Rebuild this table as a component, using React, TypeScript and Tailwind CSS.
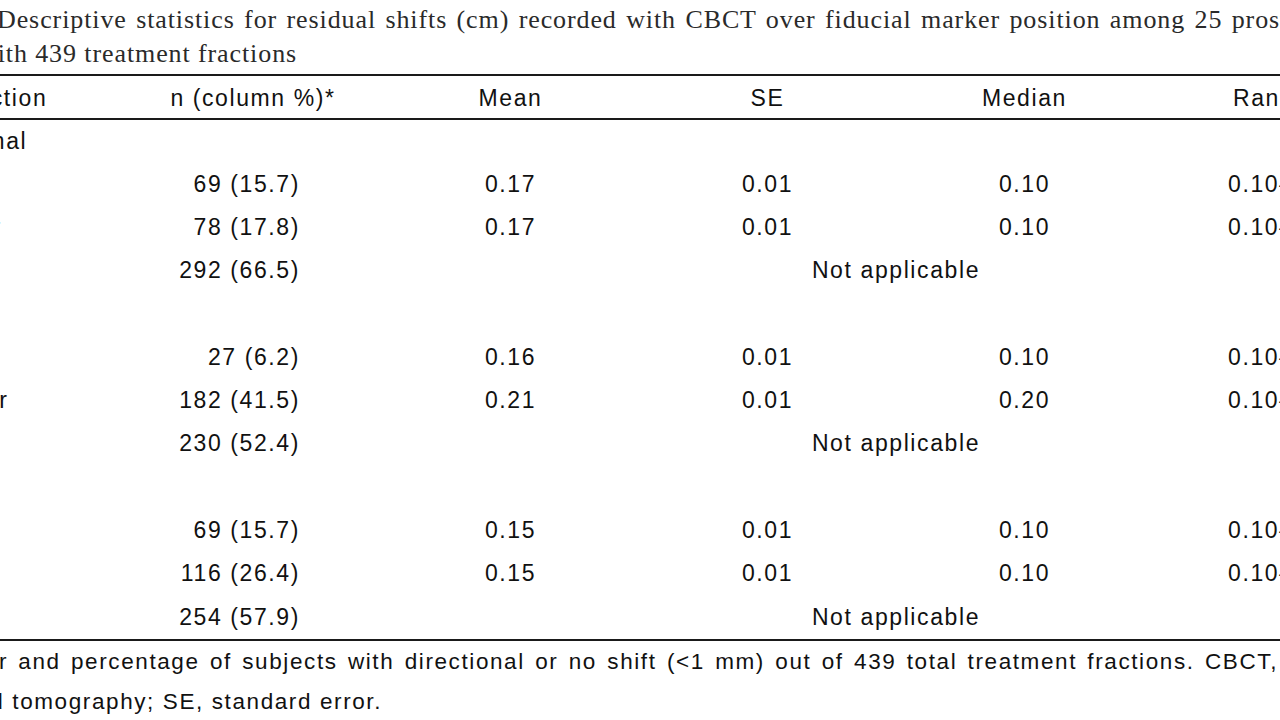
import React from "react";

type Row =
  | { kind: "section"; label: string }
  | { kind: "data"; label: string; n: string; mean: string; se: string; median: string; range: string }
  | { kind: "none"; label: string; n: string };

const rows: Row[] = [
  { kind: "section", label: "Longitudinal" },
  { kind: "data", label: "Inferior", n: "69 (15.7)", mean: "0.17", se: "0.01", median: "0.10", range: "0.10–0.50" },
  { kind: "data", label: "Superior", n: "78 (17.8)", mean: "0.17", se: "0.01", median: "0.10", range: "0.10–0.50" },
  { kind: "none", label: "No shift", n: "292 (66.5)" },
  { kind: "section", label: "Vertical" },
  { kind: "data", label: "Anterior", n: "27 (6.2)", mean: "0.16", se: "0.01", median: "0.10", range: "0.10–0.30" },
  { kind: "data", label: "Posterior", n: "182 (41.5)", mean: "0.21", se: "0.01", median: "0.20", range: "0.10–0.70" },
  { kind: "none", label: "No shift", n: "230 (52.4)" },
  { kind: "section", label: "Lateral" },
  { kind: "data", label: "Left", n: "69 (15.7)", mean: "0.15", se: "0.01", median: "0.10", range: "0.10–0.40" },
  { kind: "data", label: "Right", n: "116 (26.4)", mean: "0.15", se: "0.01", median: "0.10", range: "0.10–0.40" },
  { kind: "none", label: "No shift", n: "254 (57.9)" },
];

const sans = "font-['Liberation_Sans',Arial,sans-serif] text-[23px] tracking-[1.6px]";

export default function App() {
  return (
    <div className="h-[720px] w-[1280px] overflow-hidden bg-white text-[#111]">
      {/* Caption */}
      <div className="pt-[3px] font-['Liberation_Serif','Times_New_Roman',serif] text-[26px] leading-[34px] tracking-[0.9px] text-[#2a2a2a]">
        <p className="ml-[-3px] whitespace-nowrap [word-spacing:2px]">
          Descriptive statistics for residual shifts (cm) recorded with CBCT over fiducial marker position among 25 prostate cancer patients
        </p>
        <p className="ml-[-22px] whitespace-nowrap">with 439 treatment fractions</p>
      </div>

      <div className="mt-[3px] ml-[-116px] w-[1526px] border-b-2 border-[#1a1a1a]">
        <table className={`w-[1526px] table-fixed border-collapse ${sans}`}>
          <colgroup>
            <col className="w-[240px]" />
            <col className="w-[258px]" />
            <col className="w-[257px]" />
            <col className="w-[257px]" />
            <col className="w-[257px]" />
            <col className="w-[257px]" />
          </colgroup>
          <thead>
            <tr className="h-[44px] border-y-2 border-[#1a1a1a]">
              <th className="p-0 pt-[2px] text-left font-normal">Shift direction</th>
              <th className="p-0 pt-[2px] text-center font-normal">n (column %)*</th>
              <th className="p-0 pt-[2px] text-center font-normal">Mean</th>
              <th className="p-0 pt-[2px] text-center font-normal">SE</th>
              <th className="p-0 pt-[2px] text-center font-normal">Median</th>
              <th className="p-0 pt-[2px] pl-[80px] text-left font-normal">Range</th>
            </tr>
          </thead>
          <tbody>
            {rows.map((r, i) => {
              if (r.kind === "section") {
                return (
                  <tr key={i} className="h-[43.3px]">
                    <td className="p-0" colSpan={6}>{r.label}</td>
                  </tr>
                );
              }
              if (r.kind === "none") {
                return (
                  <tr key={i} className="h-[43.3px]">
                    <td className="p-0 pl-[18px]">{r.label}</td>
                    <td className="p-0 pr-[82px] text-right">{r.n}</td>
                    <td className="p-0 text-center" colSpan={4}>Not applicable</td>
                  </tr>
                );
              }
              return (
                <tr key={i} className="h-[43.3px]">
                  <td className="p-0 pl-[18px]">{r.label}</td>
                  <td className="p-0 pr-[82px] text-right">{r.n}</td>
                  <td className="p-0 text-center">{r.mean}</td>
                  <td className="p-0 text-center">{r.se}</td>
                  <td className="p-0 text-center">{r.median}</td>
                  <td className="p-0 pl-[75px] text-left">{r.range}</td>
                </tr>
              );
            })}
          </tbody>
        </table>
      </div>

      {/* Footnote */}
      <div className="pt-[1px] font-['Liberation_Sans',Arial,sans-serif] text-[22.5px] leading-[40px] tracking-[1.6px] text-[#111]">
        <p className="ml-[-92px] w-[1370px] text-justify [text-align-last:justify]">
          *Number and percentage of subjects with directional or no shift (&lt;1 mm) out of 439 total treatment fractions. CBCT,
        </p>
        <p className="ml-[-242px] whitespace-nowrap">cone-beam computed tomography; SE, standard error.</p>
      </div>
    </div>
  );
}
